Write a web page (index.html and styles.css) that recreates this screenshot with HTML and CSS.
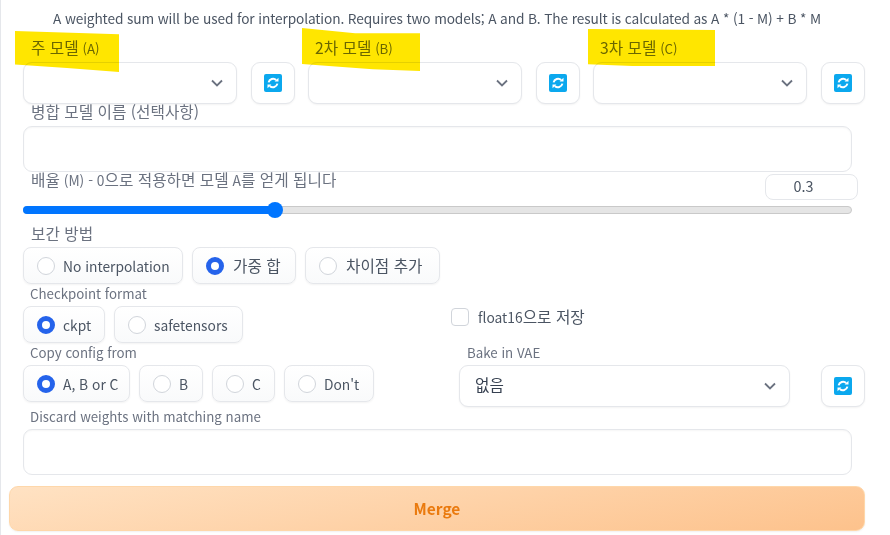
FILE: index.html
```html
<!DOCTYPE html>
<html lang="ko">
<head>
<meta charset="utf-8">
<title>Checkpoint Merger</title>
<link rel="stylesheet" href="styles.css">
</head>
<body>
<svg class="defs" width="0" height="0" aria-hidden="true">
  <symbol id="sync" viewBox="0 0 18 18">
    <rect width="18" height="18" rx="2" fill="#0ba8ee"/>
    <path d="M4.6 8.4A4.6 4.6 0 0 1 12.2 6" fill="none" stroke="#fff" stroke-width="2"/>
    <path d="M10.6 7.6h3.9V3.7z" fill="#fff"/>
    <path d="M13.4 9.6A4.6 4.6 0 0 1 5.8 12" fill="none" stroke="#fff" stroke-width="2"/>
    <path d="M7.4 10.4H3.5v3.9z" fill="#fff"/>
  </symbol>
  <symbol id="chev" viewBox="0 0 12 8">
    <path d="M1 1.5l5 5 5-5" fill="none" stroke="#6b7280" stroke-width="1.8"/>
  </symbol>
</svg>
<main class="page">
  <p class="desc">A weighted sum will be used for interpolation. Requires two models; A and B. The result is calculated as A * (1 - M) + B * M</p>

  <div class="models">
    <div class="model">
      <span class="label"><span class="ko first">주 모델</span> (A)</span>
      <div class="pick">
        <div class="select"><svg class="chev"><use href="#chev"/></svg></div>
        <button class="tool"><svg class="sync"><use href="#sync"/></svg></button>
      </div>
    </div>
    <div class="model">
      <span class="label"><span class="ko">2차 모델</span> (B)</span>
      <div class="pick">
        <div class="select"><svg class="chev"><use href="#chev"/></svg></div>
        <button class="tool"><svg class="sync"><use href="#sync"/></svg></button>
      </div>
    </div>
    <div class="model">
      <span class="label"><span class="ko">3차 모델</span> (C)</span>
      <div class="pick">
        <div class="select"><svg class="chev"><use href="#chev"/></svg></div>
        <button class="tool"><svg class="sync"><use href="#sync"/></svg></button>
      </div>
    </div>
  </div>

  <span class="label label-name"><span class="ko first">병합 모델 이름 (선택사항)</span></span>
  <div class="textbox"></div>

  <div class="ratio-head">
    <span class="label label-ratio"><span class="ko first">배율</span> (M) - 0<span class="ko">으로 적용하면 모델</span> A<span class="ko">를 얻게 됩니다</span></span>
    <div class="number">0.3</div>
  </div>
  <div class="slider"><div class="fill"></div><div class="thumb"></div></div>

  <span class="label label-interp"><span class="ko first">보간 방법</span></span>
  <div class="radios">
    <label class="radio w160"><i class="dot"></i>No interpolation</label>
    <label class="radio w104"><i class="dot on"></i><span class="ko first">가중 합</span></label>
    <label class="radio w135"><i class="dot"></i><span class="ko first">차이점 추가</span></label>
  </div>

  <div class="split">
    <div class="left">
      <span class="label label-small">Checkpoint format</span>
      <div class="radios">
        <label class="radio w82"><i class="dot on"></i>ckpt</label>
        <label class="radio w129"><i class="dot"></i>safetensors</label>
      </div>
    </div>
    <label class="check"><i class="box"></i><span>float16<span class="ko">으로 저장</span></span></label>
  </div>

  <div class="split">
    <div class="left">
      <span class="label label-small">Copy config from</span>
      <div class="radios">
        <label class="radio w107"><i class="dot on"></i>A, B or C</label>
        <label class="radio w64"><i class="dot"></i>B</label>
        <label class="radio w63"><i class="dot"></i>C</label>
        <label class="radio w90"><i class="dot"></i>Don't</label>
      </div>
    </div>
    <div class="bake">
      <span class="label label-small">Bake in VAE</span>
      <div class="pick bake-pick">
        <div class="select wide"><span class="ko first">없음</span><svg class="chev"><use href="#chev"/></svg></div>
        <button class="tool"><svg class="sync"><use href="#sync"/></svg></button>
      </div>
    </div>
  </div>

  <span class="label label-small label-discard">Discard weights with matching name</span>
  <div class="textbox"></div>

  <button class="merge">Merge</button>

  <i class="mark mark-a"></i>
  <i class="mark mark-b"></i>
  <i class="mark mark-c"></i>
</main>
</body>
</html>
```
FILE: styles.css
```css
* { box-sizing: border-box; }
html, body { margin: 0; padding: 0; background: #fff; }
body {
  width: 890px;
  height: 535px;
  overflow: hidden;
  font-family: "Noto Sans CJK KR", "Noto Sans", sans-serif;
  color: #374151;
}
.defs { position: absolute; }
.ko { font-size: 15.7px; }
.first { margin-left: 1px; }
.page {
  position: relative;
  height: 535px;
  padding: 8px 25px 0 22px;
  border-left: 1px solid #e5e7eb;
  display: flex;
  flex-direction: column;
  align-items: flex-start;
}
.desc {
  margin: 0;
  width: 829px;
  height: 20px;
  padding-left: 30px;
  font-size: 13.7px;
  letter-spacing: -0.12px;
  line-height: 20px;
  white-space: nowrap;
  color: #4b5563;
}
.label {
  display: block;
  margin-left: 7px;
  font-size: 13.3px;
  line-height: 20px;
  height: 20px;
  color: #6b7280;
  white-space: nowrap;
}
.models { display: flex; gap: 13px; margin-top: 10px; }
.model { width: 272px; }
.model .label { height: 24px; }
.pick { display: flex; justify-content: space-between; }
.select {
  position: relative;
  width: 214px;
  height: 42px;
  padding-left: 15px;
  padding-bottom: 3px;
  border: 1px solid #e5e7eb;
  border-radius: 9px;
  background: #fff;
  box-shadow: 0 1px 2px rgba(0,0,0,.05);
  display: flex;
  align-items: center;
  justify-content: space-between;
  font-size: 14.4px;
  color: #374151;
}
.chev { position: absolute; right: 13px; top: 16px; width: 12px; height: 8px; }
.tool {
  width: 44px;
  height: 42px;
  padding: 0;
  border: 1px solid #e5e7eb;
  border-radius: 9px;
  background: #fff;
  box-shadow: 0 1px 2px rgba(0,0,0,.05);
  display: flex;
  align-items: center;
  justify-content: center;
}
.sync { width: 18px; height: 18px; display: block; }
.label-name { margin-top: -2px; margin-bottom: 4px; }
.textbox {
  width: 829px;
  height: 46px;
  border: 1px solid #e5e7eb;
  border-radius: 9px;
  background: #fff;
  box-shadow: inset 0 1px 2px rgba(0,0,0,.04);
}
.ratio-head {
  width: 835px;
  height: 28px;
  margin-top: 2px;
  display: flex;
  justify-content: space-between;
}
.label-ratio { margin-top: -4px; font-size: 13.8px; }
.number {
  width: 93px;
  height: 26px;
  padding-right: 16px;
  border: 1px solid #e5e7eb;
  border-radius: 8px;
  font-size: 14.4px;
  line-height: 22px;
  text-align: center;
  color: #4b5563;
}
.slider {
  position: relative;
  width: 829px;
  height: 8px;
  margin-top: 4px;
  border: 1px solid #c9c9c9;
  border-radius: 4px;
  background: #e5e5e5;
}
.fill {
  position: absolute;
  left: -1px;
  top: -1px;
  width: 252px;
  height: 8px;
  border-radius: 4px 0 0 4px;
  background: #0075ff;
}
.thumb {
  position: absolute;
  left: 243px;
  top: -5px;
  width: 16px;
  height: 16px;
  border-radius: 50%;
  background: #0075ff;
}
.label-interp { margin-top: 10px; margin-bottom: 3px; }
.radios { display: flex; gap: 9px; }
.radio {
  height: 37px;
  padding-left: 13px;
  padding-bottom: 0;
  display: flex;
  align-items: center;
  gap: 8px;
  line-height: 16px;
  border: 1px solid #e5e7eb;
  border-radius: 8px;
  background: linear-gradient(#fff, #f9fafb);
  box-shadow: 0 1px 2px rgba(0,0,0,.05);
  font-size: 13.8px;
  color: #4b5563;
  white-space: nowrap;
}
.radio .dot { margin-top: 0; }
.w160 { width: 160px; }
.w104 { width: 104px; }
.w135 { width: 135px; }
.w82 { width: 82px; }
.w129 { width: 129px; }
.w107 { width: 107px; }
.w64 { width: 64px; }
.w63 { width: 63px; }
.w90 { width: 90px; }
.dot {
  flex: none;
  width: 18px;
  height: 18px;
  border: 1px solid #d1d5db;
  border-radius: 50%;
  background: #fff;
}
.dot.on { border: 5px solid #2563eb; }
.split { display: flex; width: 842px; }
.left { width: 428px; }
.label-small { height: 22px; line-height: 19px; }
.check {
  margin-top: 24px;
  height: 18px;
  display: flex;
  align-items: center;
  gap: 9px;
  font-size: 13.8px;
  line-height: 16px;
  color: #4b5563;
  white-space: nowrap;
}
.box {
  flex: none;
  width: 18px;
  height: 18px;
  border: 1px solid #d1d5db;
  border-radius: 4px;
  background: #fff;
}
.bake { width: 406px; margin-left: 8px; }
.bake-pick .wide { width: 331px; padding-left: 14px; }
.bake-pick { width: 406px; }
.bake .label { margin-left: 8px; }
.label-discard { height: 22px; line-height: 20px; }
.merge {
  width: 856px;
  height: 45px;
  margin-top: 11px;
  margin-left: -14px;
  padding-bottom: 3px;
  border: 1px solid #fed7aa;
  border-radius: 9px;
  background: linear-gradient(170deg, #ffe2c3, #fdc28c);
  box-shadow: 0 1px 2px rgba(0,0,0,.06);
  font-family: inherit;
  font-size: 15.5px;
  font-weight: 600;
  color: #ea7a0e;
}
.mark {
  position: absolute;
  background: #ffe600;
  mix-blend-mode: multiply;
}
.mark-a {
  left: 14px;
  top: 31px;
  width: 104px;
  height: 41px;
  clip-path: polygon(0 0, 100% 8%, 100% 100%, 50% 90%, 0 82%);
}
.mark-b {
  left: 301px;
  top: 28px;
  width: 118px;
  height: 43px;
  clip-path: polygon(0 0, 45% 12%, 100% 12%, 100% 100%, 60% 96%, 0 84%);
}
.mark-c {
  left: 587px;
  top: 29px;
  width: 127px;
  height: 37px;
  clip-path: polygon(0 0, 100% 3%, 100% 100%, 35% 100%, 0 95%);
}
```
